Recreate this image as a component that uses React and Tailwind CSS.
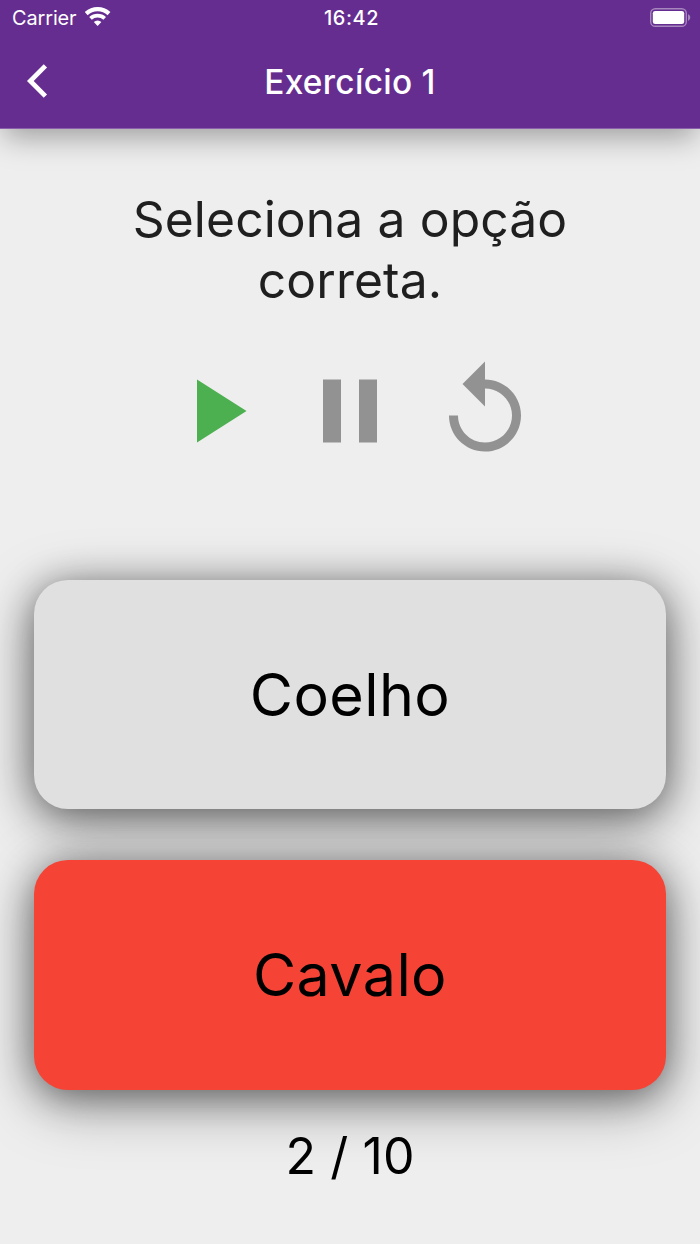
import React, { useState } from "react";

const options = [
  { label: "Coelho", color: "bg-[#e0e0e0]" },
  { label: "Cavalo", color: "bg-[#f54336]" },
];

const StatusBar = () => {
  return (
    <div className="grid h-[34px] grid-cols-3 items-center pr-[9px] pl-3 text-[19.9px]">
      <div className="flex items-center gap-[8px]">
        <span className="pt-[3px] tracking-[-0.1px]">Carrier</span>
        {/* Wifi */}
        <svg width="26" height="19" viewBox="0 0 26 19" fill="none" stroke="white">
          <path d="M1.2 6.6a17 17 0 0 1 22.8 0" strokeWidth="4.2" />
          <path d="M5.5 11.4a10.4 10.4 0 0 1 14.2 0" strokeWidth="3.8" />
          <path d="M12.6 19l-3.8-4a5.5 5.5 0 0 1 7.6 0z" fill="white" stroke="none" />
        </svg>
      </div>
      <span className="pt-[3px] text-center font-medium tracking-[0.6px]">16:42</span>
      {/* Battery */}
      <svg className="justify-self-end" width="41" height="19" viewBox="0 0 41 19">
        <rect x="0.7" y="0.7" width="35.6" height="17.6" rx="4.6" fill="none" stroke="#a586bd" strokeWidth="1.4" />
        <rect x="2.8" y="2.9" width="31.4" height="13.2" rx="2.4" fill="white" />
        <path d="M38 6.3c3 1 3 5.4 0 6.4z" fill="#a586bd" />
      </svg>
    </div>
  );
};

const App = () => {
  const [playing, setPlaying] = useState(true);

  return (
    <div className="flex h-[1244px] w-[700px] flex-col overflow-hidden bg-[#eeeeee] font-['Inter',sans-serif]">
      <header className="h-[129px] border-b border-[#8a5fab] bg-[#662d91] text-white shadow-[0_12px_28px_-4px_rgba(0,0,0,0.34)]">
        <StatusBar />
        <div className="grid h-[94px] grid-cols-[100px_1fr_100px] items-center">
          <button type="button" aria-label="Voltar" className="pl-[26px]">
            <svg width="22" height="34" viewBox="0 0 22 34" fill="none" stroke="white" strokeWidth="4.7">
              <path d="M19.4 1.9L4.3 17l15.1 15.1" />
            </svg>
          </button>
          <h1 className="pt-[3px] text-center text-[33.4px] font-medium tracking-[0.3px]">Exercício 1</h1>
        </div>
      </header>

      <main className="flex flex-col items-center">
        <p className="mt-[59.5px] w-[500px] text-center text-[49.8px] leading-[61px] tracking-[0.1px] text-[#1f1f1f]">
          Seleciona a opção correta.
        </p>

        {/* Controls */}
        <div className="mt-[46px] flex gap-[27px]">
          <button type="button" aria-label="Tocar" onClick={() => setPlaying(true)}>
            <svg className="size-[108px] fill-[#4caf50]" viewBox="0 0 24 24">
              <path d="M8 5v14l11-7z" />
            </svg>
          </button>
          <button type="button" aria-label="Pausar" aria-pressed={!playing} onClick={() => setPlaying(false)}>
            <svg className="size-[108px] fill-[#929292]" viewBox="0 0 24 24">
              <path d="M6 19h4V5H6v14zm8-14v14h4V5h-4z" />
            </svg>
          </button>
          <button type="button" aria-label="Repetir" onClick={() => setPlaying(true)}>
            <svg className="size-[108px] fill-[#929292]" viewBox="0 0 24 24">
              <path d="M12 5V1L7 6l5 5V7c3.31 0 6 2.69 6 6s-2.69 6-6 6-6-2.69-6-6H4c0 4.42 3.58 8 8 8s8-3.58 8-8-3.58-8-8-8z" />
            </svg>
          </button>
        </div>

        {/* Answers */}
        <div className="mt-[115px] flex flex-col gap-[51px]">
          {options.map((option) => (
            <button
              key={option.label}
              type="button"
              className={`h-[229.5px] w-[632px] rounded-[34px] pt-[2px] text-[59.2px] tracking-[0.4px] text-black shadow-[0_5px_36px_rgba(0,0,0,0.42),0_14px_60px_rgba(0,0,0,0.36)] ${option.color}`}
            >
              {option.label}
            </button>
          ))}
        </div>

        <p className="mt-[36px] text-[50px] leading-[61px] tracking-[0.1px] text-black">2 / 10</p>
      </main>
    </div>
  );
};

export default App;
